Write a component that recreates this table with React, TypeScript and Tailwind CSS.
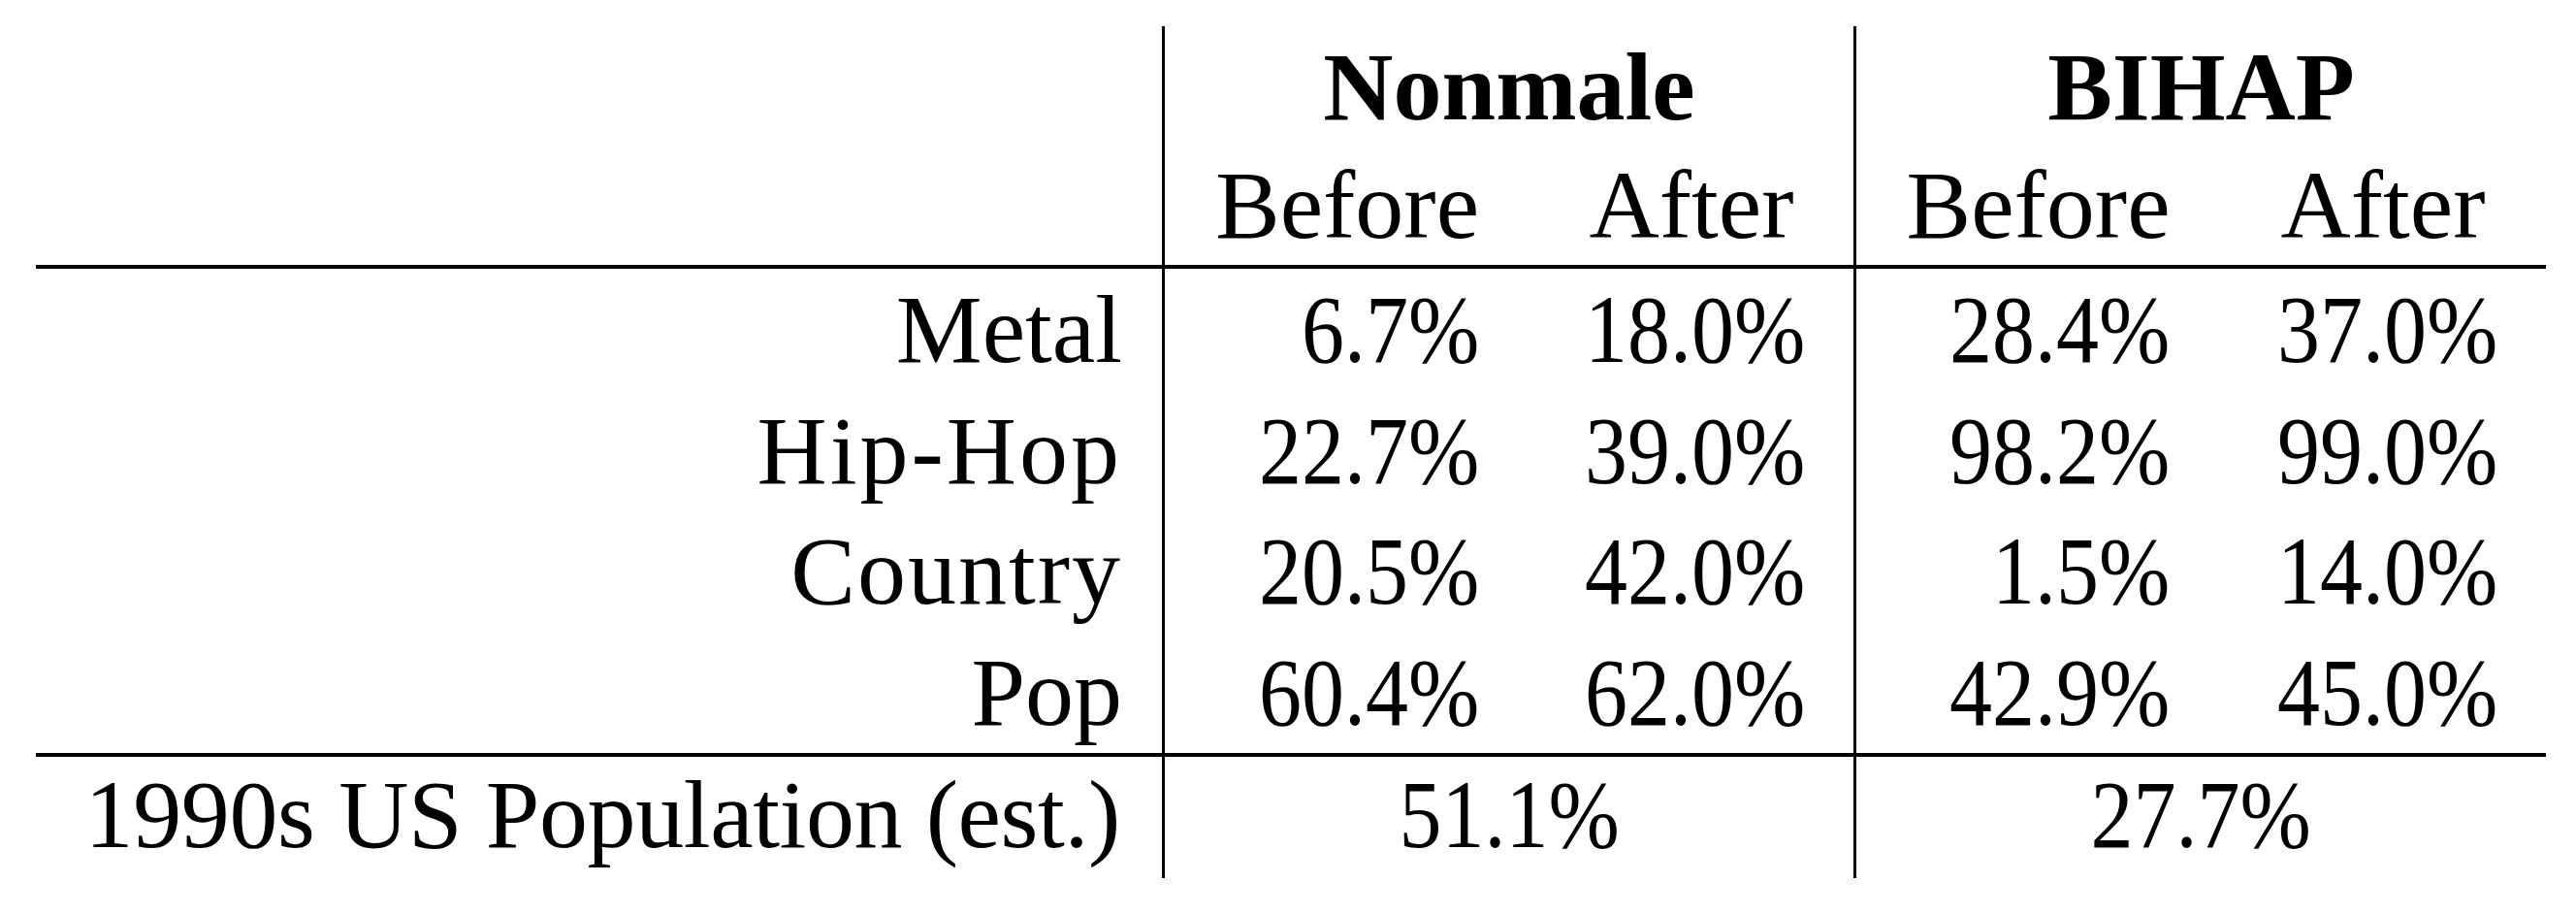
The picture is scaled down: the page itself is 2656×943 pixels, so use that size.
import React from "react";

const rows: [string, string, string, string, string, string][] = [
  ["Metal", "", "6.7%", "18.0%", "28.4%", "37.0%"],
  ["Hip-Hop", "tracking-[3px]", "22.7%", "39.0%", "98.2%", "99.0%"],
  ["Country", "tracking-[2px]", "20.5%", "42.0%", "1.5%", "14.0%"],
  ["Pop", "", "60.4%", "62.0%", "42.9%", "45.0%"],
];

function Num({ v }: { v: string }) {
  return <span className="inline-block origin-right scale-x-[0.88]">{v}</span>;
}

export default function App() {
  return (
    <div className="w-[2656px] h-[943px] bg-white text-black font-['Liberation_Serif',serif] text-[100px] pl-[37px] pt-[27px]">
      <div className="grid grid-cols-[1161px_379px_334px_378px_336px] w-[2588px]">
        {/* header row 1 */}
        <div className="h-[125px]" />
        <div className="col-span-2 h-[125px] leading-[125px] text-center font-bold border-l-[3px] border-black">
          Nonmale
        </div>
        <div className="col-span-2 h-[125px] leading-[125px] text-center font-bold border-l-[3px] border-black">
          BIHAP
        </div>
        {/* header row 2 */}
        <div className="h-[121px]" />
        <div className="h-[121px] leading-[119px] text-center border-l-[3px] border-black">Before</div>
        <div className="h-[121px] leading-[119px] text-center">After</div>
        <div className="h-[121px] leading-[119px] text-center border-l-[3px] border-black">Before</div>
        <div className="h-[121px] leading-[119px] text-center">After</div>
        {/* rule */}
        <div className="col-span-5 h-[4px] bg-black" />
        {/* body */}
        {rows.map(([label, tr, a, b, c, d]) => (
          <React.Fragment key={label}>
            <div className="h-[124.7px] leading-[125px] text-right pr-[41px] whitespace-nowrap">
              <span className={tr}>{label}</span>
            </div>
            <div className="h-[124.7px] leading-[125px] text-right pr-[52px] border-l-[3px] border-black whitespace-nowrap"><Num v={a} /></div>
            <div className="h-[124.7px] leading-[125px] text-right pr-[50px] whitespace-nowrap"><Num v={b} /></div>
            <div className="h-[124.7px] leading-[125px] text-right pr-[52px] border-l-[3px] border-black whitespace-nowrap"><Num v={c} /></div>
            <div className="h-[124.7px] leading-[125px] text-right pr-[50px] whitespace-nowrap"><Num v={d} /></div>
          </React.Fragment>
        ))}
        {/* rule */}
        <div className="col-span-5 h-[4px] bg-black" />
        {/* population row */}
        <div className="h-[125px] leading-[119px] text-right pr-[43px] whitespace-nowrap">
          <span className="tracking-[-0.4px]">1990s US Population (est.)</span>
        </div>
        <div className="col-span-2 h-[125px] leading-[119px] text-center border-l-[3px] border-black">
          <span className="inline-block scale-x-[0.88]">51.1%</span>
        </div>
        <div className="col-span-2 h-[125px] leading-[119px] text-center border-l-[3px] border-black">
          <span className="inline-block scale-x-[0.88]">27.7%</span>
        </div>
      </div>
    </div>
  );
}
